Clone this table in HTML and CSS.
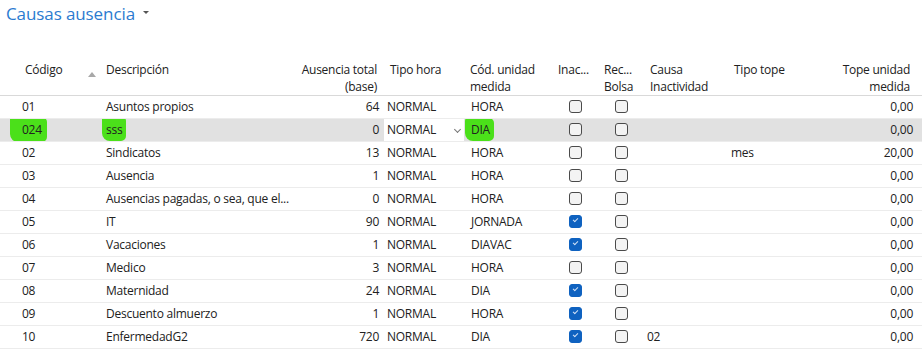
FILE: index.html
```html
<!DOCTYPE html>
<html lang="es">
<head>
<meta charset="utf-8">
<title>Causas ausencia</title>
<link rel="stylesheet" href="styles.css">
</head>
<body>
<div class="page">
  <div class="title-bar">
    <h1 class="title">Causas ausencia</h1>
    <span class="title-caret"></span>
  </div>
  <table class="grid">
    <colgroup>
      <col class="c-cod"><col class="c-desc"><col class="c-aus"><col class="c-tipo"><col class="c-uni">
      <col class="c-inac"><col class="c-rec"><col class="c-causa"><col class="c-tope"><col class="c-topeu">
    </colgroup>
    <thead>
      <tr>
        <th class="h-cod"><span>Código</span><span class="sort"></span></th>
        <th>Descripción</th>
        <th class="num">Ausencia total<br>(base)</th>
        <th>Tipo hora</th>
        <th>Cód. unidad<br>medida</th>
        <th class="h-chk">Inac...</th>
        <th class="h-chk">Rec...<br>Bolsa</th>
        <th>Causa<br>Inactividad</th>
        <th>Tipo tope</th>
        <th class="num">Tope unidad<br>medida</th>
      </tr>
    </thead>
    <tbody>
      <tr><td class="cod">01</td><td>Asuntos propios</td><td class="num">64</td><td>NORMAL</td><td>HORA</td><td class="chk"><span class="box"></span></td><td class="chk"><span class="box"></span></td><td></td><td></td><td class="num">0,00</td></tr>
      <tr class="sel"><td class="cod"><span class="mark m1">024</span></td><td><span class="mark m2">sss</span></td><td class="num">0</td><td class="edit">NORMAL<span class="chev"></span></td><td class="uni-sel"><span class="mark m3">DIA</span></td><td class="chk"><span class="box"></span></td><td class="chk"><span class="box"></span></td><td></td><td></td><td class="num">0,00</td></tr>
      <tr><td class="cod">02</td><td>Sindicatos</td><td class="num">13</td><td>NORMAL</td><td>HORA</td><td class="chk"><span class="box"></span></td><td class="chk"><span class="box"></span></td><td></td><td>mes</td><td class="num">20,00</td></tr>
      <tr><td class="cod">03</td><td>Ausencia</td><td class="num">1</td><td>NORMAL</td><td>HORA</td><td class="chk"><span class="box"></span></td><td class="chk"><span class="box"></span></td><td></td><td></td><td class="num">0,00</td></tr>
      <tr><td class="cod">04</td><td class="ell">Ausencias pagadas, o sea, que el...</td><td class="num">0</td><td>NORMAL</td><td>HORA</td><td class="chk"><span class="box"></span></td><td class="chk"><span class="box"></span></td><td></td><td></td><td class="num">0,00</td></tr>
      <tr><td class="cod">05</td><td>IT</td><td class="num">90</td><td>NORMAL</td><td>JORNADA</td><td class="chk"><span class="box on"></span></td><td class="chk"><span class="box"></span></td><td></td><td></td><td class="num">0,00</td></tr>
      <tr><td class="cod">06</td><td>Vacaciones</td><td class="num">1</td><td>NORMAL</td><td>DIAVAC</td><td class="chk"><span class="box on"></span></td><td class="chk"><span class="box"></span></td><td></td><td></td><td class="num">0,00</td></tr>
      <tr><td class="cod">07</td><td>Medico</td><td class="num">3</td><td>NORMAL</td><td>HORA</td><td class="chk"><span class="box"></span></td><td class="chk"><span class="box"></span></td><td></td><td></td><td class="num">0,00</td></tr>
      <tr><td class="cod">08</td><td>Maternidad</td><td class="num">24</td><td>NORMAL</td><td>DIA</td><td class="chk"><span class="box on"></span></td><td class="chk"><span class="box"></span></td><td></td><td></td><td class="num">0,00</td></tr>
      <tr><td class="cod">09</td><td>Descuento almuerzo</td><td class="num">1</td><td>NORMAL</td><td>HORA</td><td class="chk"><span class="box on"></span></td><td class="chk"><span class="box"></span></td><td></td><td></td><td class="num">0,00</td></tr>
      <tr><td class="cod">10</td><td>EnfermedadG2</td><td class="num">720</td><td>NORMAL</td><td>DIA</td><td class="chk"><span class="box on"></span></td><td class="chk"><span class="box"></span></td><td>02</td><td></td><td class="num">0,00</td></tr>
    </tbody>
  </table>
</div>
</body>
</html>
```
FILE: styles.css
```css
html, body {
  margin: 0;
  padding: 0;
  background: #ffffff;
}
body {
  font-family: "Open Sans", "Noto Sans", "Liberation Sans", sans-serif;
  font-size: 12px;
  letter-spacing: -0.25px;
  color: #212121;
}
.page {
  width: 922px;
}
.title-bar {
  display: flex;
  align-items: center;
  height: 28px;
  padding-left: 6px;
}
.title {
  margin: 0;
  font-size: 17px;
  font-weight: 400;
  letter-spacing: -0.1px;
  color: #2b7bd0;
  line-height: 28px;
}
.title-caret {
  margin-left: 8px;
  width: 0;
  height: 0;
  border-left: 3px solid transparent;
  border-right: 3px solid transparent;
  border-top: 3px solid #555;
  margin-top: -3px;
}
.grid {
  margin-top: 28px;
  width: 922px;
  border-collapse: collapse;
  table-layout: fixed;
}
.c-cod { width: 100px; }
.c-desc { width: 200px; }
.c-aus { width: 84px; }
.c-tipo { width: 80px; }
.c-uni { width: 88px; }
.c-inac { width: 46px; }
.c-rec { width: 46px; }
.c-causa { width: 84px; }
.c-tope { width: 72px; }
.c-topeu { width: 122px; }

th {
  font-weight: 400;
  text-align: left;
  vertical-align: top;
  line-height: 17px;
  padding: 5px 0 0 6px;
  height: 34px;
  border-bottom: 1px solid #d9d9d9;
  white-space: nowrap;
}
th.num { text-align: right; padding-right: 7px; padding-left: 0; }
th:last-child.num { padding-right: 12px; }
th.h-cod { padding-left: 25px; position: relative; }
.sort {
  position: absolute;
  left: 88px;
  top: 16px;
  width: 0;
  height: 0;
  border-left: 4px solid transparent;
  border-right: 4px solid transparent;
  border-bottom: 5px solid #a8a8a8;
}
td {
  height: 22px;
  padding: 0 0 0 3px;
  border-bottom: 1px solid #ececec;
  white-space: nowrap;
  overflow: hidden;
  line-height: 22px;
}
td.cod { padding-left: 22px; }
td.num { text-align: right; padding-right: 5px; padding-left: 0; }
td:last-child.num { padding-right: 9px; }
td:nth-child(2) { padding-left: 6px; }
td:nth-child(5) { padding-left: 7px; }
td.chk { padding: 0; text-align: center; }
.box {
  display: inline-block;
  vertical-align: middle;
  width: 11px;
  height: 11px;
  border: 1px solid #4a4a4a;
  border-radius: 3px;
  background: #f3f3f3;
  position: relative;
  margin-top: -2px;
}
.box.on {
  background: #0f62c0;
  border-color: #0f62c0;
}
.box.on::after {
  content: "";
  position: absolute;
  left: 3px;
  top: 2px;
  width: 4px;
  height: 2px;
  border-left: 1px solid #cfe0f5;
  border-bottom: 1px solid #cfe0f5;
  transform: rotate(-45deg);
}
tr.sel td { background: #e1e1e1; }
tr.sel td.edit {
  background: #ffffff;
  position: relative;
}
.chev {
  position: absolute;
  right: 4px;
  top: 8px;
  width: 4px;
  height: 4px;
  border-right: 1px solid #777;
  border-bottom: 1px solid #777;
  transform: rotate(45deg);
}
.mark {
  background: #4be01a;
  padding: 4px 5px 4px 8px;
  margin-left: -8px;
  border-radius: 3px 5px 5px 8px;
}
.mark.m1 {
  padding-left: 12px;
  margin-left: -12px;
}
.mark.m2 {
  padding: 5px 4px 3px 4px;
  margin-left: -4px;
}
.mark.m3 {
  padding: 3px 4px 3px 6px;
  margin-left: -6px;
}
```
